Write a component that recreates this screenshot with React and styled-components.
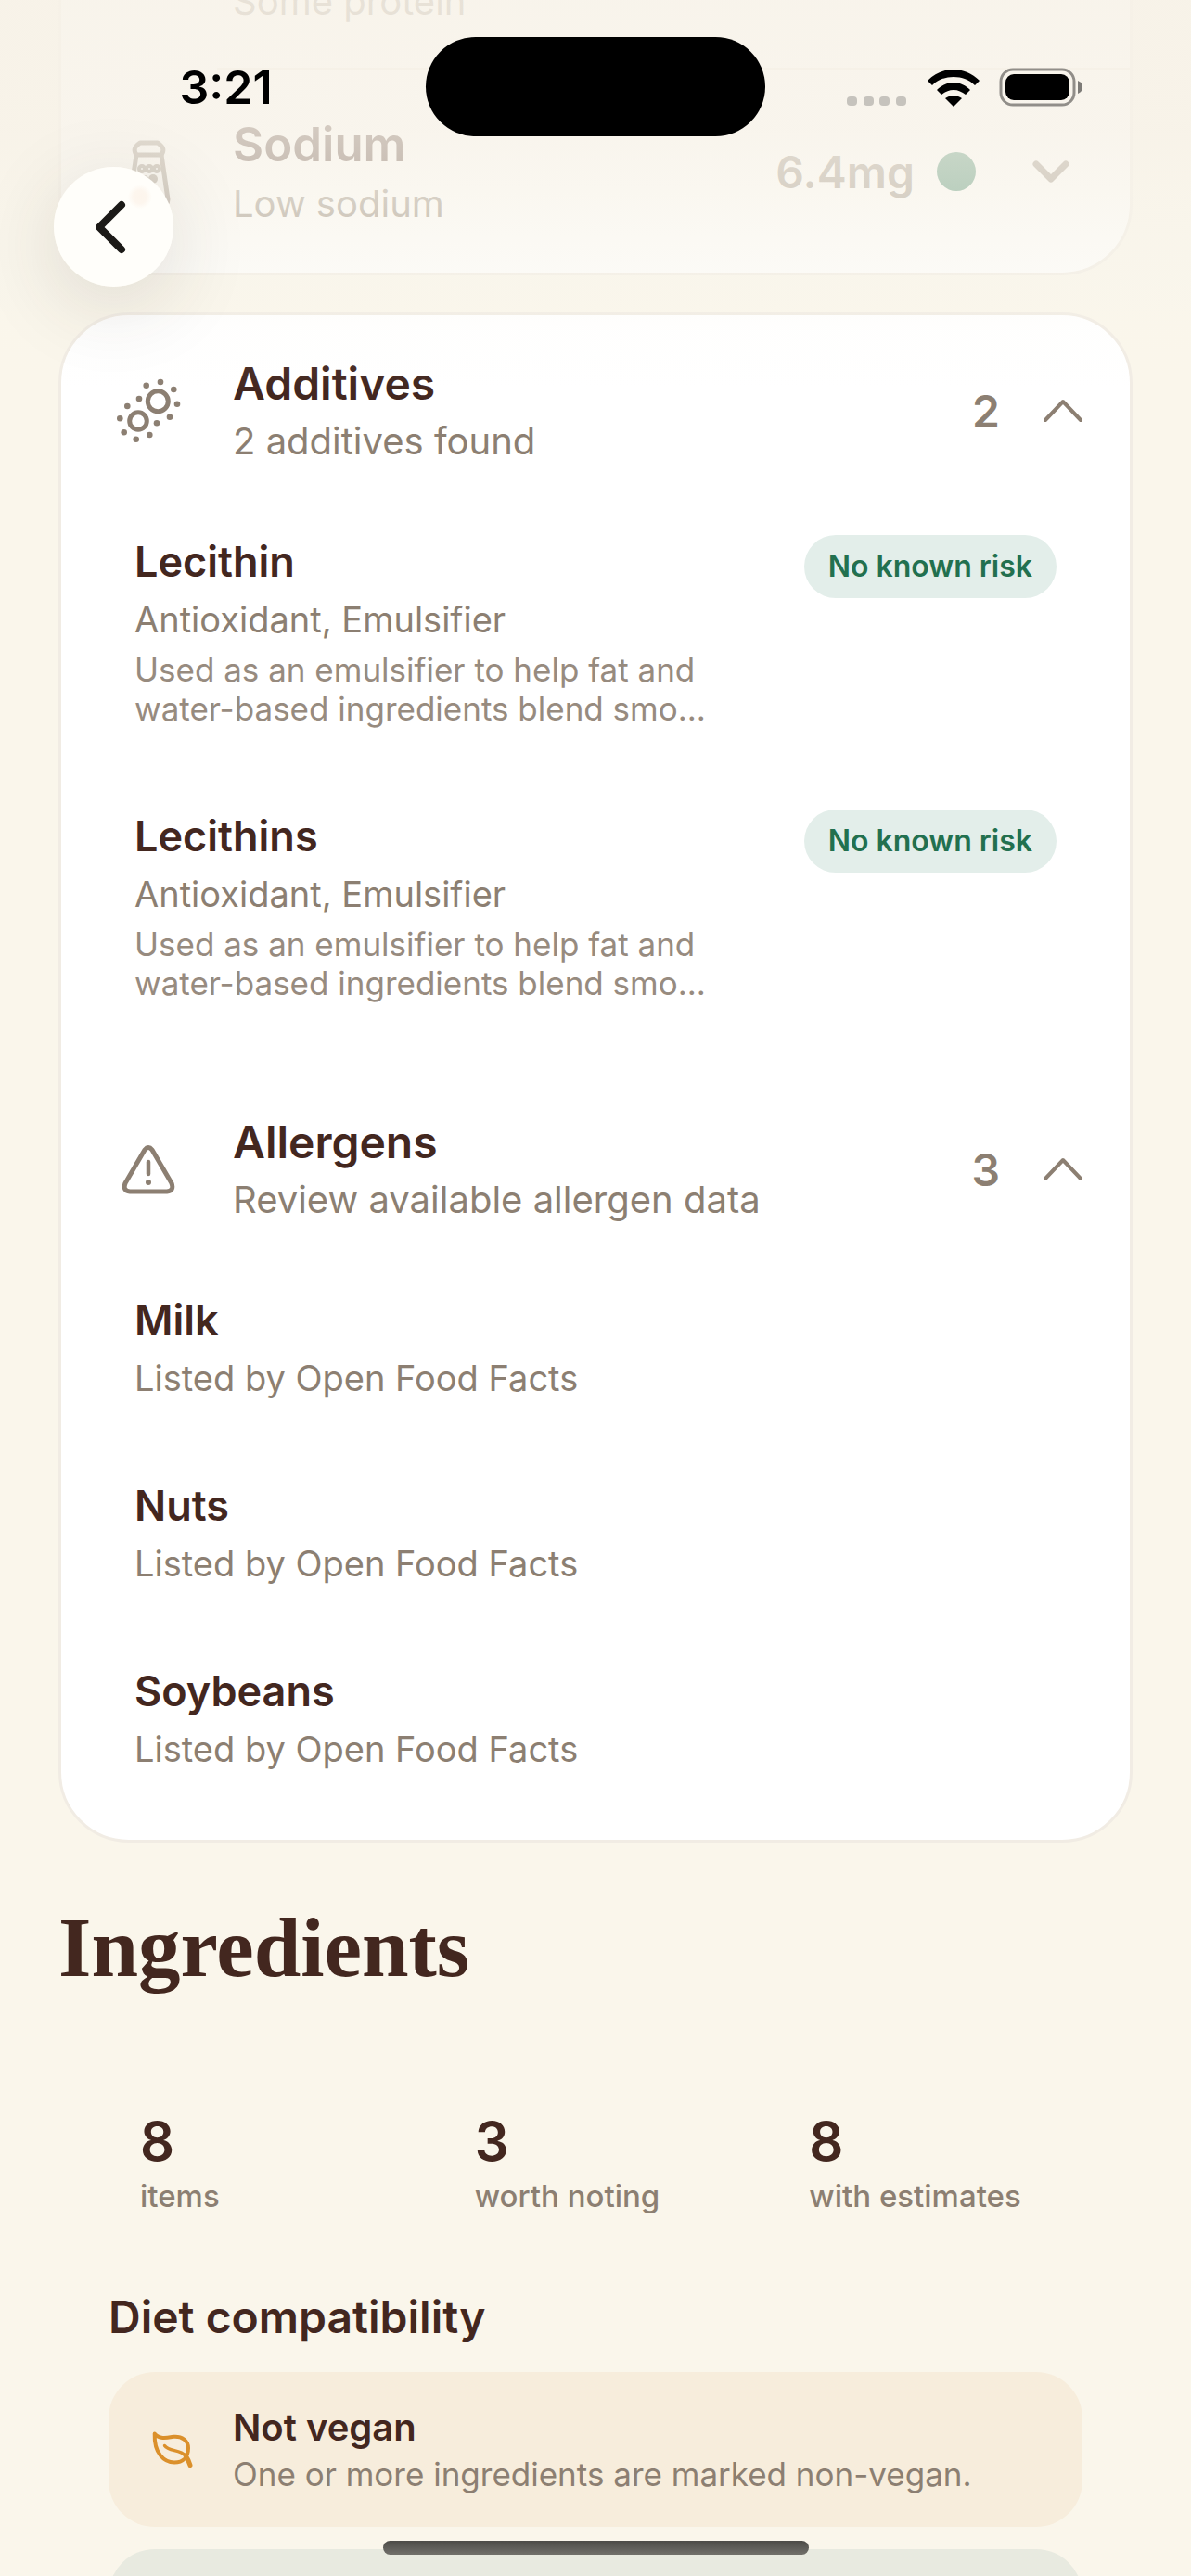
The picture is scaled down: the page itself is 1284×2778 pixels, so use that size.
import React, { useState } from 'react';
import styled, { createGlobalStyle } from 'styled-components';

const ADDITIVES = [
    {
        id: 'lecithin',
        name: 'Lecithin',
        role: 'Antioxidant, Emulsifier',
        info: 'Used as an emulsifier to help fat and water-based ingredients blend smo...',
        risk: 'No known risk',
    },
    {
        id: 'lecithins',
        name: 'Lecithins',
        role: 'Antioxidant, Emulsifier',
        info: 'Used as an emulsifier to help fat and water-based ingredients blend smo...',
        risk: 'No known risk',
    },
];

const ALLERGENS = [
    { id: 'milk', name: 'Milk', role: 'Listed by Open Food Facts' },
    { id: 'nuts', name: 'Nuts', role: 'Listed by Open Food Facts' },
    { id: 'soybeans', name: 'Soybeans', role: 'Listed by Open Food Facts' },
];

const STATS = [
    { value: 8, label: 'items' },
    { value: 3, label: 'worth noting' },
    { value: 8, label: 'with estimates' },
];

const Chevron = ({ up }) => (
    <svg width="46" height="30" viewBox="0 0 46 30" fill="none" stroke="currentColor" strokeWidth={up ? 4 : 7} strokeLinecap="round" strokeLinejoin="round">
        <path d={up ? 'M4 25 L23 5 L42 25' : 'M7 7 L23 23 L39 7'} />
    </svg>
);

const ShakerIcon = () => (
    <svg width="72" height="80" viewBox="0 0 72 80" fill="none" stroke="currentColor" strokeWidth="5" strokeLinejoin="round">
        <path d="M26 9 H45 C52 14 52 17 49 22 H22 C19 17 19 14 26 9 Z" />
        <path d="M22 22 L15 70 Q15 76 22 76 H49 Q56 76 56 70 L49 22" />
        <g strokeWidth="4">
            <circle cx="28" cy="37" r="3" />
            <circle cx="36" cy="37" r="3" />
            <circle cx="44" cy="37" r="3" />
        </g>
        <circle cx="40" cy="48" r="5" fill="currentColor" stroke="none" />
        <circle cx="31" cy="48" r="4" fill="currentColor" stroke="none" />
    </svg>
);

const AdditivesIcon = () => (
    <svg width="72" height="72" viewBox="0 0 72 72" fill="none" stroke="currentColor" strokeWidth="5">
        <circle cx="45.3" cy="25.7" r="11" />
        <circle cx="24" cy="47" r="9.3" />
        <g fill="currentColor" stroke="none">
            {[[32.7, 8.7], [48, 5], [62.3, 13], [66, 28.7], [58, 42.7], [44, 49.3], [36.3, 62], [21.7, 66.7], [8.7, 59.3], [4.3, 44.3], [12.3, 31], [25, 23]].map(([x, y]) => (
                <circle key={x} cx={x} cy={y} r="3.3" />
            ))}
        </g>
    </svg>
);

const WarningIcon = () => (
    <svg width="72" height="72" viewBox="0 0 72 72" fill="none" stroke="currentColor" strokeWidth="5" strokeLinejoin="round" strokeLinecap="round">
        <path d="M31 15 Q35 10 39 15 L60 51 Q63 59 55 60 H15 Q7 59 10 51 Z" />
        <path d="M35 28 V41" strokeWidth="4.5" />
        <circle cx="35" cy="50" r="3" fill="currentColor" stroke="none" />
    </svg>
);

const LeafIcon = () => (
    <svg width="48" height="44" viewBox="0 0 48 44" fill="none" stroke="currentColor" strokeWidth="4" strokeLinecap="round" strokeLinejoin="round">
        <path d="M5.7 4.5 C11 11 19 9 26 7.8 C35 7 42 12 42 20 C42 30 36 35.5 27 35.5 C16 35.5 5 26 5.7 4.5 Z" />
        <path d="M16.5 17.5 C21 24 33 21 39 28" strokeWidth="3.4" />
        <path d="M39 28 C41 31 43 35 44 38.5" strokeWidth="5" />
    </svg>
);

const Row = ({ icon, title, sub, count, open, onToggle, children }) => (
    <section>
        <RowButton type="button" aria-expanded={open} onClick={onToggle}>
            <IconSlot>{icon}</IconSlot>
            <RowText>
                <RowTitle>{title}</RowTitle>
                <RowSub>{sub}</RowSub>
            </RowText>
            <Count>{count}</Count>
            <Chevron up={open} />
        </RowButton>
        {open && children}
    </section>
);

const App = () => {
    const [open, setOpen] = useState({ additives: true, allergens: true });
    const toggle = (key) => setOpen({ ...open, [key]: !open[key] });

    return (
        <Screen>
            <GlobalStyle />
            {/* scrolled content */}
            <Content>
                <NutrientCard>
                    <ProteinSub>Some protein</ProteinSub>
                    <SodiumRow type="button">
                        <IconSlot><ShakerIcon /></IconSlot>
                        <RowText>
                            <RowTitle $large>Sodium</RowTitle>
                            <RowSub>Low sodium</RowSub>
                        </RowText>
                        <Amount>6.4mg</Amount>
                        <Dot />
                        <Chevron />
                    </SodiumRow>
                </NutrientCard>

                <Card>
                    <Row
                        icon={<AdditivesIcon />}
                        title="Additives"
                        sub="2 additives found"
                        count={2}
                        open={open.additives}
                        onToggle={() => toggle('additives')}
                    >
                        <List>
                            {ADDITIVES.map((item) => (
                                <Item key={item.id}>
                                    <ItemText>
                                        <ItemName>{item.name}</ItemName>
                                        <ItemRole>{item.role}</ItemRole>
                                        <ItemInfo>{item.info}</ItemInfo>
                                    </ItemText>
                                    <Badge>{item.risk}</Badge>
                                </Item>
                            ))}
                        </List>
                    </Row>
                    <Row
                        icon={<WarningIcon />}
                        title="Allergens"
                        sub="Review available allergen data"
                        count={3}
                        open={open.allergens}
                        onToggle={() => toggle('allergens')}
                    >
                        <List>
                            {ALLERGENS.map((item) => (
                                <Item key={item.id}>
                                    <ItemText>
                                        <ItemName>{item.name}</ItemName>
                                        <ItemRole>{item.role}</ItemRole>
                                    </ItemText>
                                </Item>
                            ))}
                        </List>
                    </Row>
                </Card>

                <Heading>Ingredients</Heading>
                <Stats>
                    {STATS.map((stat) => (
                        <Stat key={stat.label}>
                            <StatValue>{stat.value}</StatValue>
                            <StatLabel>{stat.label}</StatLabel>
                        </Stat>
                    ))}
                </Stats>

                <Diet>
                    <DietTitle>Diet compatibility</DietTitle>
                    <DietBox $tone="#f7eddc">
                        <LeafSlot><LeafIcon /></LeafSlot>
                        <div>
                            <DietName>Not vegan</DietName>
                            <DietInfo>One or more ingredients are marked non-vegan.</DietInfo>
                        </div>
                    </DietBox>
                    <DietBox $tone="#e8eae0" />
                </Diet>
            </Content>

            {/* floating system chrome */}
            <TopFade />
            <StatusBar>
                <Time>3:21</Time>
                <Island />
                <StatusIcons>
                    <svg width="66" height="12" viewBox="0 0 66 12" fill="#c6c3bd">
                        {[0, 18, 35, 53].map((x) => (
                            <rect key={x} x={x} y="1" width="11" height="10" rx="4" />
                        ))}
                    </svg>
                    <svg width="56" height="40" viewBox="0 0 56 40">
                        <path d="M28 0 C38 0 48 4 56 12 L51 17 C45 11 37 8 28 8 C19 8 11 11 5 17 L0 12 C8 4 18 0 28 0 Z" />
                        <path d="M28 14 C35 14 41 17 46 22 L41 27 C37 24 33 22 28 22 C23 22 19 24 15 27 L10 22 C15 17 21 14 28 14 Z" />
                        <path d="M28 28 C31 28 34 29 37 31 L28 40 L19 31 C22 29 25 28 28 28 Z" />
                    </svg>
                    <svg width="92" height="42" viewBox="0 0 92 42">
                        <rect x="2" y="2" width="79" height="38" rx="13" fill="none" stroke="#918e89" strokeWidth="3" />
                        <rect x="7" y="7" width="69" height="28" rx="9" />
                        <path d="M85 14 Q90 16 90 21 Q90 26 85 28 Z" fill="#7d7b77" />
                    </svg>
                </StatusIcons>
            </StatusBar>
            <BackButton type="button" aria-label="Back">
                <svg width="40" height="64" viewBox="0 0 40 64" fill="none" stroke="#1c1a17" strokeWidth="8" strokeLinecap="round" strokeLinejoin="round">
                    <path d="M28 8 L4 32 L28 56" />
                </svg>
            </BackButton>
            <HomeBar />
        </Screen>
    );
};

const GlobalStyle = createGlobalStyle`
    * {
        box-sizing: border-box;
    }
    body {
        margin: 0;
        background: #faf6eb;
        color: #43271f;
        font-family: Inter, 'Liberation Sans', sans-serif;
    }
    h2, h3, p, ul, dl, dd {
        margin: 0;
        padding: 0;
    }
    button {
        all: unset;
        box-sizing: border-box;
        cursor: pointer;
    }
    svg {
        flex: none;
        display: block;
    }
`;

const Screen = styled.div`
    position: relative;
    height: 100vh;
    overflow: hidden;
`;

const Content = styled.main`
    padding: 0 63px;
`;

const Card = styled.section`
    background: #fff;
    border: 3px solid #f1ece4;
    border-radius: 76px;
`;

const NutrientCard = styled(Card)`
    border-top: 0;
    border-radius: 0 0 76px 76px;
    margin-bottom: 40px;
`;

const RowButton = styled.button`
    width: 100%;
    height: 206px;
    padding: 0 49px 0 59px;
    display: flex;
    align-items: center;
    color: #8c7f72;
`;

const SodiumRow = styled(RowButton)`
    height: 218px;
    padding-right: 62px;
`;

const IconSlot = styled.span`
    width: 72px;
    margin-right: 54px;
`;

const RowText = styled.span`
    flex: 1;
    display: flex;
    flex-direction: column;
    gap: 2px;
    padding-top: 4px;
`;

const RowTitle = styled.span`
    font-size: ${(props) => (props.$large ? 51 : 48)}px;
    font-weight: 600;
    line-height: ${(props) => (props.$large ? 64 : 60)}px;
    color: #43271f;
`;

const RowSub = styled.span`
    font-size: 40px;
    line-height: 60px;
`;

const Count = styled.span`
    font-size: 48px;
    font-weight: 600;
    margin-right: 45px;
`;

const Amount = styled(Count)`
    margin-right: 24px;
`;

const Dot = styled.span`
    width: 42px;
    height: 42px;
    border-radius: 50%;
    background: #2a7858;
    margin-right: 58px;
`;

const ProteinSub = styled.p`
    height: 76px;
    margin-left: 168px;
    padding-left: 17px;
    border-bottom: 3px solid #f1ece4;
    font-size: 40px;
    line-height: 4px;
    color: #8c7f72;
`;

const List = styled.ul`
    list-style: none;
    padding: 0 79px 20px;
`;

const Item = styled.li`
    display: flex;
    justify-content: space-between;
    align-items: flex-start;
    padding: 31px 0 45px;
`;

const ItemText = styled.div`
    width: 640px;
`;

const ItemName = styled.h3`
    font-size: 45px;
    font-weight: 600;
    line-height: 58px;
`;

const ItemRole = styled.p`
    font-size: 38px;
    line-height: 66px;
    color: #8c7f72;
`;

const ItemInfo = styled.p`
    margin-bottom: 12px;
    font-size: 35px;
    line-height: 42px;
    color: #978b7f;
`;

const Badge = styled.span`
    height: 68px;
    padding: 0 26px;
    border-radius: 34px;
    background: #e3eeea;
    color: #22704f;
    font-size: 32px;
    font-weight: 600;
    line-height: 68px;
    white-space: nowrap;
`;

const Heading = styled.h2`
    margin-top: 60px;
    font-family: 'Liberation Serif', serif;
    font-size: 91px;
    font-weight: 700;
    line-height: 108px;
`;

const Stats = styled.dl`
    display: grid;
    grid-template-columns: repeat(3, 1fr);
    gap: 32px;
    margin: 120px 0 0;
    padding: 0 54px;
`;

const Stat = styled.div`
    display: flex;
    flex-direction: column;
    padding-left: 34px;
`;

const StatValue = styled.dd`
    font-size: 58px;
    font-weight: 600;
    line-height: 68px;
`;

const StatLabel = styled.dt`
    font-size: 33px;
    font-weight: 500;
    line-height: 50px;
    color: #8c7f72;
    white-space: nowrap;
`;

const Diet = styled.section`
    margin-top: 76px;
    padding: 0 54px;
    display: flex;
    flex-direction: column;
    gap: 24px;
`;

const DietTitle = styled.h3`
    padding-bottom: 5px;
    font-size: 48px;
    font-weight: 600;
    line-height: 60px;
`;

const DietBox = styled.div`
    display: flex;
    align-items: center;
    height: 167px;
    padding: 0 44px;
    border-radius: 50px;
    background: ${(props) => props.$tone};
`;

const LeafSlot = styled.span`
    width: 90px;
    color: #db902b;
`;

const DietName = styled.p`
    font-size: 40px;
    font-weight: 600;
    line-height: 52px;
`;

const DietInfo = styled.p`
    font-size: 35px;
    line-height: 48px;
    color: #8c7f72;
`;

const TopFade = styled.div`
    position: absolute;
    inset: 0 0 auto;
    height: 430px;
    pointer-events: none;
    background: linear-gradient(rgba(247, 242, 232, 0.86) 0, rgba(247, 242, 232, 0.8) 140px, rgba(248, 244, 234, 0.7) 210px, rgba(248, 245, 236, 0.45) 300px, rgba(250, 247, 238, 0.1) 350px, rgba(250, 247, 238, 0) 420px);
`;

const StatusBar = styled.header`
    position: absolute;
    inset: 0 0 auto;
    height: 187px;
    padding: 0 28px;
    display: grid;
    grid-template-columns: 1fr 366px 1fr;
    align-items: center;
`;

const Time = styled.span`
    justify-self: center;
    font-size: 50px;
    font-weight: 600;
    color: #000;
`;

const Island = styled.span`
    height: 107px;
    border-radius: 54px;
    background: #000;
`;

const StatusIcons = styled.span`
    justify-self: center;
    display: flex;
    align-items: flex-end;
    gap: 21px;
`;

const BackButton = styled.button`
    position: absolute;
    left: 58px;
    top: 180px;
    width: 129px;
    height: 129px;
    display: flex;
    align-items: center;
    justify-content: center;
    border-radius: 50%;
    background: radial-gradient(circle at 72% 25%, #fdf5ec 0, #fdf6ee 7px, #fffefa 13px);
    box-shadow: 0 20px 90px rgba(60, 50, 40, 0.14);
`;

const HomeBar = styled.div`
    position: absolute;
    bottom: 23px;
    left: 50%;
    width: 459px;
    height: 15px;
    margin-left: -229px;
    border-radius: 8px;
    background: linear-gradient(#4c4b47, #71706b);
`;

export default App;
